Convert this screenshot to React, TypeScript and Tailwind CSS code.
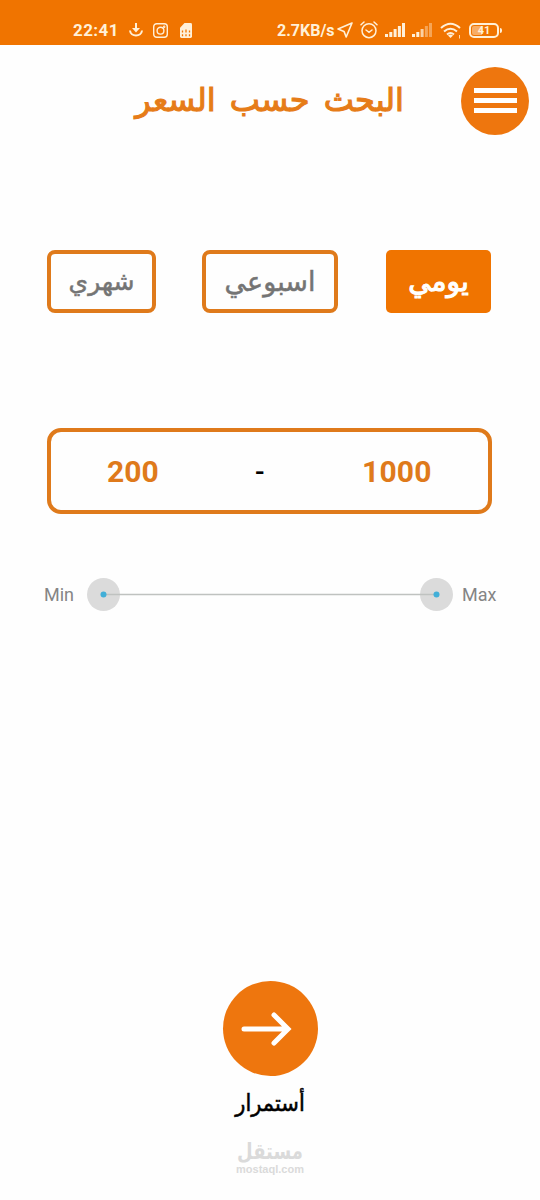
import React from "react";

const arabic = "font-['DejaVu_Sans',sans-serif]";

function Signal({ faded }: { faded?: boolean }) {
  return (
    <svg className="h-[14px] w-[20px]" viewBox="0 0 20 14" fill="#fff0d8">
      <rect x="0" y="11" width="3" height="3" />
      <rect x="4.3" y="9" width="3" height="5" />
      <rect x="8.6" y="6" width="3" height="8" opacity={faded ? 0.75 : 1} />
      <rect x="12.9" y="3" width="3" height="11" opacity={faded ? 0.4 : 1} />
      <rect x="17" y="0" width="3" height="14" opacity={faded ? 0.4 : 1} />
    </svg>
  );
}

function StatusBar() {
  return (
    <header className="flex h-[45px] items-center bg-[#f07400] pl-[73px] pt-[15px] font-[Roboto,sans-serif] font-bold text-[#fff0d8]">
      <span className="w-[56px] text-[17px] leading-[28px] tracking-[0.4px]">22:41</span>
      <svg className="h-[14px] w-[14px]" viewBox="0 0 14 14" fill="none" stroke="#fff0d8" strokeWidth="2">
        <path d="M7 0v7M1 7.500c.5 6.500 11.500 6.500 12 0" />
        <path d="M3 5h8L7 9.500z" fill="#fff0d8" stroke="none" />
      </svg>
      <svg className="ml-[10px] h-[15px] w-[15px]" viewBox="0 0 15 15" fill="none" stroke="#fff0d8" strokeWidth="1.4">
        <rect x=".7" y=".7" width="13.600" height="13.600" rx="3" />
        <circle cx="7.500" cy="7.700" r="3.400" />
        <circle cx="11.200" cy="3.800" r=".5" />
      </svg>
      <svg className="ml-[12px] h-[15px] w-[12px]" viewBox="0 0 12 16" preserveAspectRatio="none">
        <path d="M4.500 0H10.500Q12 0 12 1.500V14.500Q12 16 10.500 16H1.500Q0 16 0 14.500V5z" fill="#fff0d8" />
        <path d="M2.500 8v2M6 7v3M9.500 8v2M2.500 12v2M6 12v2M9.500 12v2" stroke="#f07400" strokeWidth="1.300" />
      </svg>
      <span className="ml-[85px] w-[60px] whitespace-nowrap pt-[2px] text-[16px] leading-[28px]">2.7KB/s</span>
      <svg className="h-[16px] w-[16px]" viewBox="0 0 16 16" fill="none" stroke="#fff0d8" strokeWidth="1.600" strokeLinejoin="round">
        <path d="M15 1 1 7l6 2.400L9.200 15z" />
      </svg>
      <svg className="ml-[7px] h-[18px] w-[18px]" viewBox="0 0 18 18" fill="none" stroke="#fff0d8" strokeWidth="1.500" strokeLinecap="round">
        <circle cx="9" cy="9.700" r="7" />
        <path d="M1 3.800 4 1M17 3.800 14 1M6 9l3 2.300L12 9" />
      </svg>
      <div className="ml-[7px] flex gap-[7px]">
        <Signal />
        <Signal faded />
      </div>
      <svg className="ml-[8px] h-[17px] w-[22px]" viewBox="0 0 22 17" fill="none" stroke="#fff0d8" strokeWidth="2">
        <path d="M1 6Q10.500-2.500 20 6M4 9.500q6.500-5.500 13 0M7 12.500q3.500-3 7 0" />
        <path d="m8 13.500 2.500 2.500 2.500-2.500q-2.500-2-5 0z" fill="#fff0d8" stroke="none" />
        <path d="M19.500 13v3.500" strokeWidth="1" opacity=".8" />
      </svg>
      <div className="ml-[7px] flex h-[15px] w-[30px] items-center justify-center rounded-[5px] border-2 border-[#fff0d8]">
        <span className="flex h-[9px] w-[24px] items-center justify-center rounded-[2px] bg-[linear-gradient(90deg,#f8ad65_42%,transparent_42%)] text-[11px] leading-none">41</span>
      </div>
      <span className="ml-[1px] h-[5px] w-[2px] rounded-r bg-[#fff0d8]" />
    </header>
  );
}

function Slider() {
  return (
    <svg className="h-[33px] w-[366px] shrink-0" viewBox="0 0 366 33">
      <circle cx="16.500" cy="16.500" r="16.500" fill="#dbdbdb" />
      <circle cx="349.500" cy="16.500" r="16.500" fill="#dbdbdb" />
      <path d="M17 16.500H349" stroke="#bfc2c0" strokeWidth="1.600" />
      <circle cx="16.500" cy="16.500" r="3" fill="#42afd8" />
      <circle cx="349.500" cy="16.500" r="3" fill="#42afd8" />
    </svg>
  );
}

export default function App() {
  return (
    <div className="flex h-[1200px] w-[540px] flex-col overflow-hidden bg-[#fefefe]">
      <StatusBar />
      <div className="mt-[22px] grid h-[68px] grid-cols-[1fr_268px_1fr] items-center pr-[11px] pl-[11px]">
        <span />
        <h1 dir="rtl" className={`${arabic} whitespace-nowrap pb-[2px] text-center text-[32px] leading-[66px] font-normal text-[#e67c18] [word-spacing:4px] [-webkit-text-stroke:1.1px_#e67c18]`}>البحث حسب السعر</h1>
        <button aria-label="القائمة" className="flex size-[68px] flex-col items-center justify-center gap-[5px] justify-self-end rounded-full bg-[#ee760e] pb-[2px]">
          <span className="h-[5px] w-[43px] bg-white" />
          <span className="h-[5px] w-[43px] bg-white" />
          <span className="h-[5px] w-[43px] bg-white" />
        </button>
      </div>

      <div dir="rtl" className={`${arabic} mx-[47px] mt-[115px] flex h-[63px] text-[27px] leading-[55px]`}>
        <button className="flex w-[105px] items-center justify-center rounded-[5px] bg-[#f07400] text-[28px] text-white mr-[2px] [-webkit-text-stroke:1.1px_white]">يومي</button>
        <button className="mr-[48px] flex w-[136px] items-center justify-center rounded-[8px] border-4 border-[#df7a1b] text-[27px] text-[#747474] [-webkit-text-stroke:0.5px_#747474]">اسبوعي</button>
        <button className="mr-[46px] flex w-[109px] items-center justify-center rounded-[8px] border-4 border-[#df7a1b] text-[25px] text-[#747474] [-webkit-text-stroke:0.5px_#747474]">شهري</button>
      </div>

      <div className="mx-[47px] mt-[115px] flex h-[86px] w-[445px] items-center rounded-[14px] border-4 border-[#df7a1b] font-[Roboto,sans-serif] text-[30px] font-bold text-[#df7a1b]">
        <span className="ml-[56px] w-[148px] pt-[1px]">200</span>
        <span className="w-[107px] pt-[2px] text-[28px] font-medium text-black">-</span>
        <span className="pt-[1px] tracking-[0.2px]">1000</span>
      </div>

      <div className="mt-[64px] flex h-[33px] items-center pl-[44px] font-[Roboto,sans-serif] text-[18px] text-[#858585]">
        <span className="w-[43px] shrink-0">Min</span>
        <Slider />
        <span className="ml-[9px]">Max</span>
      </div>

      <div className="mt-[370px] flex flex-col items-center">
        <button aria-label="أستمرار" className="flex size-[95px] items-center justify-center rounded-full bg-[#ee760e] pr-[6px]">
          <svg className="h-[34px] w-[52px]" viewBox="0 0 52 34" fill="none" stroke="white" strokeWidth="5" strokeLinecap="round" strokeLinejoin="miter">
            <path d="M3 17h43M33 3l14 14-14 14" />
          </svg>
        </button>
        <span dir="rtl" className={`${arabic} mt-[8px] scale-y-110 text-[21px] leading-[38px] text-black [-webkit-text-stroke:0.5px_black]`}>أستمرار</span>
        <div className="mt-[16px] flex flex-col items-center font-bold text-[#dadada]">
          <span dir="rtl" className={`${arabic} scale-y-125 text-[18px] leading-[26px]`}>مستقل</span>
          <span className="font-['Liberation_Sans',sans-serif] text-[11px] leading-[11px] font-bold">mostaql.com</span>
        </div>
      </div>
    </div>
  );
}
